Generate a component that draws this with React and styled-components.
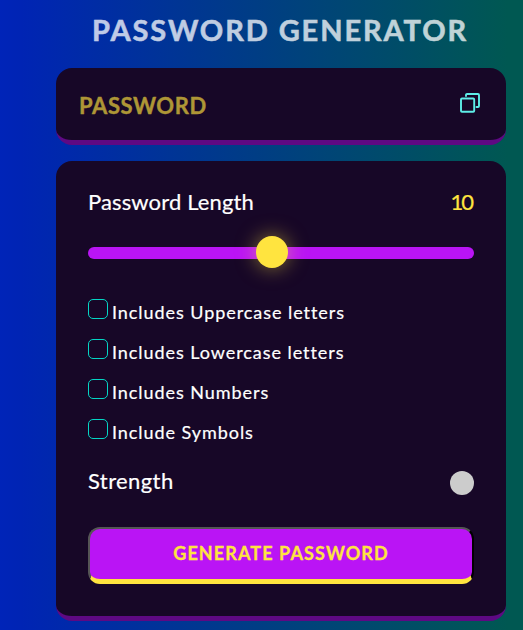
import React, { useState } from "react";
import styled, { createGlobalStyle } from "styled-components";

const GlobalStyle = createGlobalStyle`
  *, *::before, *::after { box-sizing: border-box; }
  html, body { margin: 0; height: 100%; overflow: hidden; }
  body {
    font-family: Lato, "Open Sans", sans-serif;
    background: linear-gradient(90deg, #0024b8 0%, #0024b4 4%, #005852 97%, #005852 100%);
  }
`;

const Page = styled.main`
  width: 450px;
  margin-left: 56px;
  height: 630px;
  display: flex;
  flex-direction: column;
  color: #fff;
`;

const Title = styled.h1`
  margin: 0;
  padding-left: 36px;
  height: 68px;
  line-height: 59px;
  font-size: 29px;
  font-weight: 700;
  letter-spacing: 1.9px;
  white-space: nowrap;
  color: #fff;
  -webkit-text-stroke: 0.5px #fff;
  opacity: 0.75;
`;

const Card = styled.section`
  background: #170727;
  border-bottom: 5px solid #5e0983;
  border-radius: 16px;
`;

const Display = styled(Card)`
  height: 77px;
  flex: none;
  display: flex;
  align-items: center;
  justify-content: space-between;
  padding: 0 26px 0 23px;
  margin-bottom: 16px;
`;

const PasswordField = styled.input`
  width: 300px;
  height: 40px;
  padding: 3px 0 0;
  border: 0;
  outline: 0;
  background: transparent;
  font: 700 22px Lato, sans-serif;
  letter-spacing: 0.55px;
  color: #ffe43f;
  &::placeholder {
    color: #ae9636;
    opacity: 1;
    -webkit-text-stroke: 0.4px #ae9636;
  }
`;

const CopyButton = styled.button`
  display: flex;
  padding: 0;
  margin-bottom: 3px;
  border: 0;
  background: none;
  color: #5eeee8;
`;

const Settings = styled(Card)`
  height: 460px;
  flex: none;
  padding: 0 32px;
  display: flex;
  flex-direction: column;
`;

const Row = styled.div`
  display: flex;
  align-items: center;
  justify-content: space-between;
  height: ${(p) => p.$height}px;
  flex: none;
`;

const Label = styled.span`
  font-size: 22px;
  line-height: 28px;
  letter-spacing: ${(p) => p.$spacing}px;
  -webkit-text-stroke: 0.2px currentColor;
`;

const LengthValue = styled.span`
  font-size: 22px;
  line-height: 28px;
  letter-spacing: -2px;
  padding-right: 2px;
  color: #ffe43f;
  -webkit-text-stroke: 0.2px currentColor;
`;

const Slider = styled.input`
  appearance: none;
  flex: none;
  width: 100%;
  height: 12px;
  margin: 4px 0 40px;
  border-radius: 6px;
  background: #ba14f5;
  outline: 0;
  &::-webkit-slider-thumb {
    appearance: none;
    width: 32px;
    height: 32px;
    margin-top: -2px;
    border-radius: 50%;
    background: #ffe43f;
    box-shadow: 0 0 20px rgba(255, 229, 63, 0.5);
  }
`;

const Option = styled.label`
  display: flex;
  align-items: flex-start;
  gap: 4px;
  height: 40px;
  flex: none;
`;

const Checkbox = styled.input`
  appearance: none;
  flex: none;
  width: 20px;
  height: 20px;
  margin: 0;
  border: 1px solid #04d6c5;
  border-radius: 5px;
  &:checked { background: #04d6c5; }
`;

const OptionText = styled.span`
  padding-top: 1px;
  font-size: 18px;
  line-height: 24px;
  letter-spacing: 0.94px;
  -webkit-text-stroke: 0.2px currentColor;
`;

const Indicator = styled.span`
  width: 24px;
  height: 24px;
  margin-top: 4px;
  border-radius: 50%;
  background: #ccc;
`;

const Generate = styled.button`
  height: 57px;
  flex: none;
  margin-top: 24px;
  padding: 0 0 2px;
  border: 2px solid;
  border-color: #555 #000 #ffe43f #555;
  border-bottom-width: 5px;
  border-radius: 12px;
  background: #ba14f5;
  color: #ffe43f;
  font: 700 18px Lato, sans-serif;
  letter-spacing: 1.1px;
  -webkit-text-stroke: 0.3px currentColor;
`;

const CopyIcon = () => (
  <svg width="20" height="20" viewBox="0 0 20 20" fill="none" stroke="currentColor" strokeWidth="1.9" strokeLinejoin="round" strokeLinecap="round">
    <rect x="1" y="5.5" width="13.2" height="13.2" rx="1" />
    <path d="M6 3V2a1 1 0 0 1 1-1h11a1 1 0 0 1 1 1v11a1 1 0 0 1-1 1h-1.5" />
  </svg>
);

const OPTIONS = [
  "Includes Uppercase letters",
  "Includes Lowercase letters",
  "Includes Numbers",
  "Include Symbols",
];

export default function App() {
  const [length, setLength] = useState(10);
  return (
    <>
      <GlobalStyle />
      <Page>
        <Title>PASSWORD GENERATOR</Title>
        <Display>
          <PasswordField readOnly placeholder="PASSWORD" />
          <CopyButton aria-label="Copy">
            <CopyIcon />
          </CopyButton>
        </Display>
        <Settings>
          <Row $height={82}>
            <Label $spacing={0.13}>Password Length</Label>
            <LengthValue>{length}</LengthValue>
          </Row>
          <Slider type="range" min="1" max="20" value={length} onChange={(e) => setLength(Number(e.target.value))} />
          {OPTIONS.map((text) => (
            <Option key={text}>
              <Checkbox type="checkbox" />
              <OptionText>{text}</OptionText>
            </Option>
          ))}
          <Row $height={44}>
            <Label $spacing={0.4}>Strength</Label>
            <Indicator />
          </Row>
          <Generate>GENERATE PASSWORD</Generate>
        </Settings>
      </Page>
    </>
  );
}
